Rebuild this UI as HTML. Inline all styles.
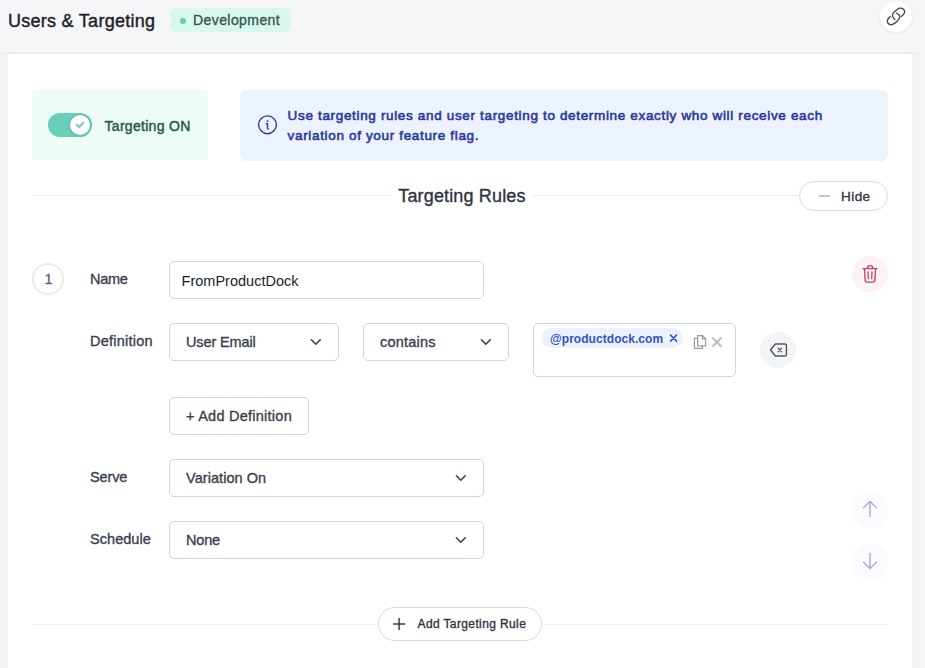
<!DOCTYPE html>
<html>
<head>
<meta charset="utf-8">
<title>Users &amp; Targeting</title>
<style>
*{box-sizing:border-box;margin:0;padding:0}
html,body{width:925px;height:668px;overflow:hidden}
body{background:#f2f3f5;font-family:"Liberation Sans",sans-serif;color:#1f2430;position:relative}
.abs{position:absolute;white-space:nowrap}
.m{-webkit-text-stroke:0.35px currentColor}
.title{left:8px;top:8.5px;font-size:18px;line-height:24px;color:#1d212b;letter-spacing:0.27px;-webkit-text-stroke:0.4px #1d212b}
.badge{left:171px;top:8px;width:120px;height:24px;background:#d8f8ed;border-radius:5px;font-size:14px;line-height:24px;color:#34584f}
.badge .dot{position:absolute;left:9px;top:9.5px;width:6px;height:6px;border-radius:50%;background:#63cdb3}
.badge span{position:absolute;left:22px;top:0;letter-spacing:0.42px}
.linkbtn{left:880.2px;top:0.6px;width:31.8px;height:31.8px;border-radius:50%;background:#fff;box-shadow:0 1px 3px rgba(0,0,0,.07)}
.hdr{left:0;top:0;width:920px;height:52px;background:#f5f6f7;box-shadow:0 1px 2px rgba(0,0,0,.045)}
.sb{left:920px;top:0;width:5px;height:668px;background:#f5f6f7}
.card{left:8px;top:54px;width:904px;height:640px;background:#fff;border-radius:3px;box-shadow:0 0 2px rgba(0,0,0,.04)}
.tbox{left:32px;top:89.3px;width:176px;height:71.2px;background:#eefcf8;border-radius:4px}
.toggle{left:48px;top:113px;width:44px;height:24px;border-radius:12px;background:#67ceb9}
.knob{left:69.8px;top:114.9px;width:20.4px;height:20.4px;border-radius:50%;background:#fff;box-shadow:0 0 0 1.6px #60c2ab}
.tlabel{left:104.5px;top:116px;font-size:14px;line-height:20px;color:#2b5a4f;letter-spacing:0.3px;-webkit-text-stroke:0.5px #2b5a4f}
.info{left:240px;top:89.5px;width:648px;height:71px;background:#ecf3fe;border-radius:6px}
.infotext{left:287.6px;top:105.5px;width:600px;font-size:13.5px;line-height:20px;color:#2d3a9b;letter-spacing:0.66px;-webkit-text-stroke:0.6px #2d3a9b;white-space:normal}
.hr{height:1px;background:#efeff2}
.h2{left:398.3px;top:184px;font-size:18px;line-height:24px;color:#2e3342;letter-spacing:0.15px}
.pill{border:1px solid #d9dade;border-radius:17px;background:#fff}
.lbl{font-size:14.5px;line-height:20px;color:#3a3f4d;letter-spacing:0px}
.inp{border:1px solid #d3d4d9;border-radius:5px;background:#fff;height:38px;font-size:14.5px;line-height:37px;color:#3a3f4d;padding-left:16px;letter-spacing:0px}
.chev{position:absolute;top:15px}
.circ{width:36px;height:36px;border-radius:50%}
svg{position:absolute;overflow:visible}
</style>
</head>
<body>
<div class="abs hdr"></div>
<div class="abs sb"></div>
<div class="abs title m">Users &amp; Targeting</div>
<div class="abs badge"><div class="dot"></div><span class="m">Development</span></div>
<div class="abs linkbtn"></div>
<div class="abs card"></div>
<div class="abs tbox"></div>
<div class="abs toggle"></div>
<div class="abs knob"></div>
<div class="abs tlabel">Targeting ON</div>
<div class="abs info"></div>
<div class="abs infotext">Use targeting rules and user targeting to determine exactly who will receive each<br>variation of your feature flag.</div>
<div class="abs hr" style="left:32px;top:195px;width:358px"></div>
<div class="abs hr" style="left:533px;top:195px;width:266px"></div>
<div class="abs h2 m">Targeting Rules</div>
<div class="abs pill" style="left:798.5px;top:181px;width:89.5px;height:30px">
  <div class="abs" style="left:19px;top:13px;width:11px;height:1.5px;background:#c6c7cc"></div>
  <div class="abs m" style="left:41.5px;top:4.5px;font-size:13.5px;line-height:20px;color:#2e3342;letter-spacing:0.45px">Hide</div>
</div>
<div class="abs" style="left:32px;top:263px;width:32px;height:32px;border:2px solid #ececef;border-radius:50%;font-size:14.5px;line-height:28px;text-align:center;color:#5a5f6b;padding-left:1px;-webkit-text-stroke:0.3px #5a5f6b">1</div>
<div class="abs lbl m" style="left:90px;top:269px;letter-spacing:-0.25px">Name</div>
<div class="abs inp" style="left:169px;top:261px;width:315px;padding-left:11.5px;color:#1b1e27;letter-spacing:0.02px;line-height:38px">FromProductDock</div>
<div class="abs lbl m" style="left:90px;top:331px;letter-spacing:0.23px">Definition</div>
<div class="abs inp m" style="left:169px;top:323px;width:170px;letter-spacing:-0.12px">User Email</div>
<div class="abs inp m" style="left:363px;top:323px;width:146px;letter-spacing:0.22px">contains</div>
<div class="abs inp" style="left:533px;top:323px;width:203px;height:54px"></div>
<div class="abs" style="left:541.4px;top:328.4px;width:141.8px;height:19.5px;border-radius:10px;background:#ecf2fd"></div>
<div class="abs" style="left:550px;top:330.5px;font-size:12px;line-height:16px;font-weight:700;color:#3553c4;letter-spacing:0.05px">@productdock.com</div>
<div class="abs circ" style="left:760px;top:332px;background:#f3f4f6"></div>
<div class="abs circ" style="left:852px;top:256px;background:#fdf2f6"></div>
<div class="abs circ" style="left:852px;top:492px;background:#fafaff"></div>
<div class="abs circ" style="left:852px;top:544px;background:#fafaff"></div>
<div class="abs inp m" style="left:169px;top:397px;width:140px;letter-spacing:0.25px">+ Add Definition</div>
<div class="abs lbl m" style="left:90px;top:467px;letter-spacing:-0.12px">Serve</div>
<div class="abs inp m" style="left:169px;top:459px;width:315px;letter-spacing:0.06px">Variation On</div>
<div class="abs lbl m" style="left:90px;top:529px;letter-spacing:0.05px">Schedule</div>
<div class="abs inp m" style="left:169px;top:521px;width:315px;letter-spacing:-0.2px">None</div>
<div class="abs hr" style="left:32px;top:624px;width:856px"></div>
<div class="abs pill" style="left:378px;top:607px;width:164px;height:34px">
  <div class="abs m" style="left:38.5px;top:8px;font-size:12px;line-height:16px;color:#2e3342;letter-spacing:0.38px">Add Targeting Rule</div>
</div>
<svg id="icons" width="925" height="668" viewBox="0 0 925 668" style="left:0;top:0" fill="none" stroke-linecap="round" stroke-linejoin="round">
<!-- link icon -->
<g stroke="#42454e" stroke-width="1.35">
  <path d="M901.30 16.53 C901.82 15.94 903.97 14.03 904.45 12.97 C904.93 11.91 904.62 10.94 904.20 10.17 C903.77 9.41 902.80 8.69 901.91 8.39 C901.02 8.10 899.96 7.97 898.85 8.39 C897.75 8.82 896.27 10.09 895.29 10.94 C894.32 11.78 893.45 12.63 893.01 13.48 C892.56 14.33 892.51 15.26 892.60 16.02 C892.68 16.79 893.13 17.46 893.51 18.06 C893.90 18.65 894.66 19.33 894.89 19.58"/>
  <path d="M890.46 16.38 C890.04 16.83 888.43 18.16 887.92 19.07 C887.41 19.99 887.24 21.02 887.41 21.87 C887.58 22.72 888.22 23.69 888.94 24.16 C889.66 24.63 890.76 24.84 891.73 24.67 C892.71 24.50 893.73 23.91 894.79 23.14 C895.85 22.38 897.29 21.07 898.09 20.09 C898.90 19.12 899.45 18.18 899.62 17.29 C899.79 16.40 899.62 15.43 899.11 14.75 C898.60 14.07 896.99 13.48 896.57 13.22"/>
</g>
<!-- toggle check -->
<path d="M76.6 124.6 L79.1 127 L83.6 122.6" stroke="#6ccbb4" stroke-width="1.9"/>
<!-- info icon -->
<circle cx="267.5" cy="124.8" r="8.9" stroke="#2d3a9b" stroke-width="1.4"/>
<circle cx="267.4" cy="121.1" r="0.95" fill="#2d3a9b" stroke="none"/>
<path d="M266.3 123.8 h1.2 v4.2 q0 0.9 0.9 0.9" stroke="#2d3a9b" stroke-width="1.4"/>
<!-- chevrons -->
<g stroke="#3a3f4d" stroke-width="1.6">
<path d="M311.4 339.8 l4.4 4.4 l4.4 -4.4"/>
<path d="M481.4 339.8 l4.4 4.4 l4.4 -4.4"/>
<path d="M456.4 475.8 l4.4 4.4 l4.4 -4.4"/>
<path d="M456.4 537.8 l4.4 4.4 l4.4 -4.4"/>
</g>
<!-- chip x -->
<path d="M670.5 335.1 l6 6 M676.5 335.1 l-6 6" stroke="#3350c2" stroke-width="1.5"/>
<!-- copy icon -->
<g stroke="#989ba2" stroke-width="1.2">
<path d="M697.6 335.6 h5 l3 3 v7.2 h-8 z"/>
<path d="M702.4 335.6 v3.2 h3.2"/>
<path d="M697.4 338.4 h-3 v10 h8 v-2.4"/>
</g>
<!-- grey x -->
<path d="M713 338.2 l7.8 7.8 M720.8 338.2 l-7.8 7.8" stroke="#c0c1c6" stroke-width="2.3"/>
<!-- backspace icon -->
<g stroke="#545862" stroke-width="1.45">
<path d="M775.4 344 h9.4 a1.6 1.6 0 0 1 1.6 1.6 v8.8 a1.6 1.6 0 0 1 -1.6 1.6 h-9.4 l-4.9 -6 z"/>
<path d="M778.1 348.3 l3.4 3.4 M781.5 348.3 l-3.4 3.4" stroke-width="1.3"/>
</g>
<!-- trash -->
<g stroke="#c43f6e" stroke-width="1.35">
<path d="M863.2 268.6 h13.6"/>
<path d="M867.4 268.4 a2.7 2.7 0 0 1 5.4 0"/>
<path d="M864.4 268.8 l0.8 11.8 a1.6 1.6 0 0 0 1.6 1.5 h6.4 a1.6 1.6 0 0 0 1.6 -1.5 l0.8 -11.8"/>
<path d="M868 271.8 l0.3 7 M872 271.8 l-0.3 7" stroke-width="1.3"/>
</g>
<!-- arrows -->
<g stroke="#9ea6e2" stroke-width="1.3">
<path d="M870 516.4 v-15 M863.6 507.6 l6.4 -6.4 l6.4 6.4"/>
<path d="M870 553.4 v15 M863.6 562.2 l6.4 6.4 l6.4 -6.4"/>
</g>
<!-- plus -->
<path d="M393.6 624 h11 M399.1 618.5 v11" stroke="#3a3f4d" stroke-width="1.5"/>
</svg>
</body>
</html>
